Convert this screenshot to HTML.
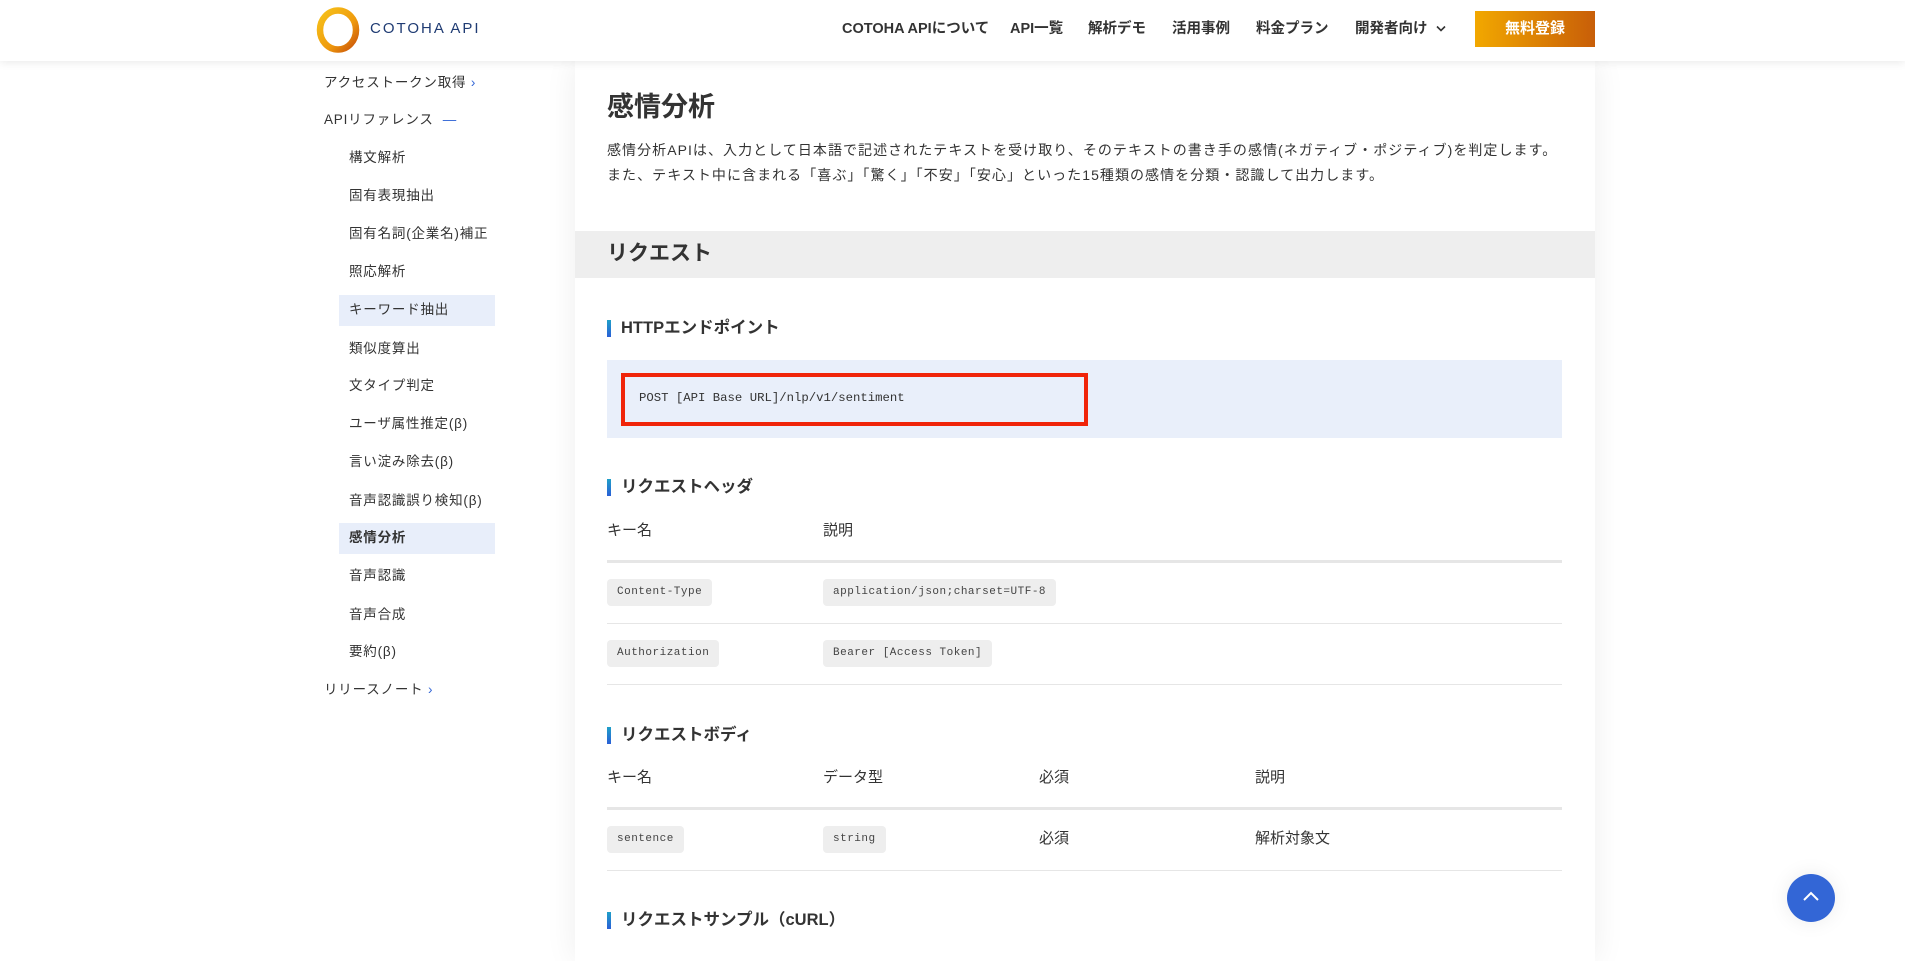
<!DOCTYPE html>
<html><head><meta charset="utf-8"><style>
*{margin:0;padding:0;box-sizing:border-box}
body{width:1905px;height:933px;overflow:hidden;background:#fff;font-family:"Liberation Sans","Noto Sans CJK JP",sans-serif;color:#333;position:relative}
.a{position:absolute;white-space:nowrap}
header{position:absolute;left:0;top:0;width:1905px;height:61px;background:#fff;box-shadow:0 2px 8px rgba(0,0,0,.08);z-index:5}
.nav{font-size:14.5px;font-weight:bold;color:#333;top:19px;line-height:20px}
.card{position:absolute;left:575px;top:61px;width:1020px;height:900px;background:#fff;box-shadow:0 0 30px rgba(0,0,0,.07)}
.side{font-size:13.5px;letter-spacing:.8px;color:#333;line-height:20px}
.hl{position:absolute;left:339px;width:156px;height:31px;background:#e8eefa}
.h3{font-size:16.5px;font-weight:bold;color:#333;line-height:22px;padding-left:14px}
.h3:before{content:"";position:absolute;left:0;top:3px;width:4px;height:17px;background:linear-gradient(#1fa0c8,#2a5fd6)}
.th{font-size:15px;color:#333;line-height:20px}
.chip{position:absolute;height:27px;background:#eee;border-radius:4px;font-family:"Liberation Mono",monospace;font-size:11px;color:#444;line-height:27px;padding:0 10px;letter-spacing:.5px}
.line{position:absolute;left:607px;width:955px;background:#e6e6e6}
</style></head><body>
<header>
<svg class="a" style="left:316px;top:7px" width="46" height="46" viewBox="0 0 46 46"><defs><linearGradient id="g" x1="0" y1="0" x2="1" y2="1"><stop offset="0" stop-color="#f6c21b"/><stop offset=".6" stop-color="#ef9a0c"/><stop offset="1" stop-color="#c8510a"/></linearGradient></defs><ellipse cx="22" cy="23" rx="18" ry="19.5" fill="none" stroke="url(#g)" stroke-width="6.5"/></svg>
<div class="a" style="left:370px;top:19px;font-size:15px;letter-spacing:2px;color:#1f3b73;line-height:20px">COTOHA API</div>
<div class="a nav" style="left:842px">COTOHA APIについて</div>
<div class="a nav" style="left:1010px">API一覧</div>
<div class="a nav" style="left:1088px">解析デモ</div>
<div class="a nav" style="left:1172px">活用事例</div>
<div class="a nav" style="left:1256px">料金プラン</div>
<div class="a nav" style="left:1355px">開発者向け</div>
<svg class="a" style="left:1436px;top:25px" width="10" height="8"><path d="M1 1.5L5 5.5L9 1.5" stroke="#333" stroke-width="1.6" fill="none"/></svg>
<div class="a" style="left:1475px;top:11px;width:120px;height:36px;background:linear-gradient(90deg,#f2a800,#c85e08);color:#fff;font-weight:bold;font-size:15px;text-align:center;line-height:36px">無料登録</div>
</header>

<div class="card"></div>

<div class="hl" style="top:295px"></div>
<div class="hl" style="top:523px"></div>
<div class="a side" style="left:324px;top:73px">アクセストークン取得 <span style="color:#3366d6">›</span></div>
<div class="a side" style="left:324px;top:110px">APIリファレンス <span style="color:#3366d6">&nbsp;—</span></div>
<div class="a side" style="left:349px;top:148px">構文解析</div>
<div class="a side" style="left:349px;top:186px">固有表現抽出</div>
<div class="a side" style="left:349px;top:224px">固有名詞(企業名)補正</div>
<div class="a side" style="left:349px;top:262px">照応解析</div>
<div class="a side" style="left:349px;top:300px">キーワード抽出</div>
<div class="a side" style="left:349px;top:339px">類似度算出</div>
<div class="a side" style="left:349px;top:376px">文タイプ判定</div>
<div class="a side" style="left:349px;top:414px">ユーザ属性推定(β)</div>
<div class="a side" style="left:349px;top:452px">言い淀み除去(β)</div>
<div class="a side" style="left:349px;top:491px">音声認識誤り検知(β)</div>
<div class="a side" style="left:349px;top:528px;font-weight:bold">感情分析</div>
<div class="a side" style="left:349px;top:566px">音声認識</div>
<div class="a side" style="left:349px;top:605px">音声合成</div>
<div class="a side" style="left:349px;top:642px">要約(β)</div>
<div class="a side" style="left:324px;top:680px">リリースノート <span style="color:#3366d6">›</span></div>

<div class="a" style="left:607px;top:90px;font-size:27px;font-weight:bold;line-height:34px;color:#333">感情分析</div>
<div class="a" style="left:607px;top:138px;font-size:14px;letter-spacing:1.05px;line-height:25px;color:#333">感情分析APIは、入力として日本語で記述されたテキストを受け取り、そのテキストの書き手の感情(ネガティブ・ポジティブ)を判定します。<br>また、テキスト中に含まれる「喜ぶ」「驚く」「不安」「安心」といった15種類の感情を分類・認識して出力します。</div>

<div class="a" style="left:575px;top:231px;width:1020px;height:47px;background:#eee"></div>
<div class="a" style="left:607px;top:240px;font-size:21px;font-weight:bold;line-height:28px">リクエスト</div>

<div class="a h3" style="left:607px;top:317px">HTTPエンドポイント</div>
<div class="a" style="left:607px;top:360px;width:955px;height:78px;background:#e9effa"></div>
<div class="a" style="left:621px;top:373px;width:467px;height:53px;border:4px solid #f0240a"></div>
<div class="a" style="left:639px;top:389px;font-family:'Liberation Mono',monospace;font-size:12.3px;color:#333;line-height:18px">POST [API Base URL]/nlp/v1/sentiment</div>

<div class="a h3" style="left:607px;top:476px">リクエストヘッダ</div>
<div class="a th" style="left:607px;top:521px">キー名</div>
<div class="a th" style="left:823px;top:521px">説明</div>
<div class="line" style="top:560px;height:3px"></div>
<div class="chip" style="left:607px;top:579px">Content-Type</div>
<div class="chip" style="left:823px;top:579px">application/json;charset=UTF-8</div>
<div class="line" style="top:623px;height:1px"></div>
<div class="chip" style="left:607px;top:640px">Authorization</div>
<div class="chip" style="left:823px;top:640px">Bearer [Access Token]</div>
<div class="line" style="top:684px;height:1px"></div>

<div class="a h3" style="left:607px;top:724px">リクエストボディ</div>
<div class="a th" style="left:607px;top:768px">キー名</div>
<div class="a th" style="left:823px;top:768px">データ型</div>
<div class="a th" style="left:1039px;top:768px">必須</div>
<div class="a th" style="left:1255px;top:768px">説明</div>
<div class="line" style="top:807px;height:3px"></div>
<div class="chip" style="left:607px;top:826px">sentence</div>
<div class="chip" style="left:823px;top:826px">string</div>
<div class="a th" style="left:1039px;top:829px">必須</div>
<div class="a th" style="left:1255px;top:829px">解析対象文</div>
<div class="line" style="top:870px;height:1px"></div>

<div class="a h3" style="left:607px;top:909px">リクエストサンプル（cURL）</div>

<div class="a" style="left:1787px;top:874px;width:48px;height:48px;border-radius:50%;background:#3366d6;box-shadow:0 0 20px rgba(0,0,0,.08)"></div>
<svg class="a" style="left:1801px;top:889px" width="20" height="14"><path d="M3 11L10 4L17 11" stroke="#fff" stroke-width="2" fill="none"/></svg>
</body></html>
